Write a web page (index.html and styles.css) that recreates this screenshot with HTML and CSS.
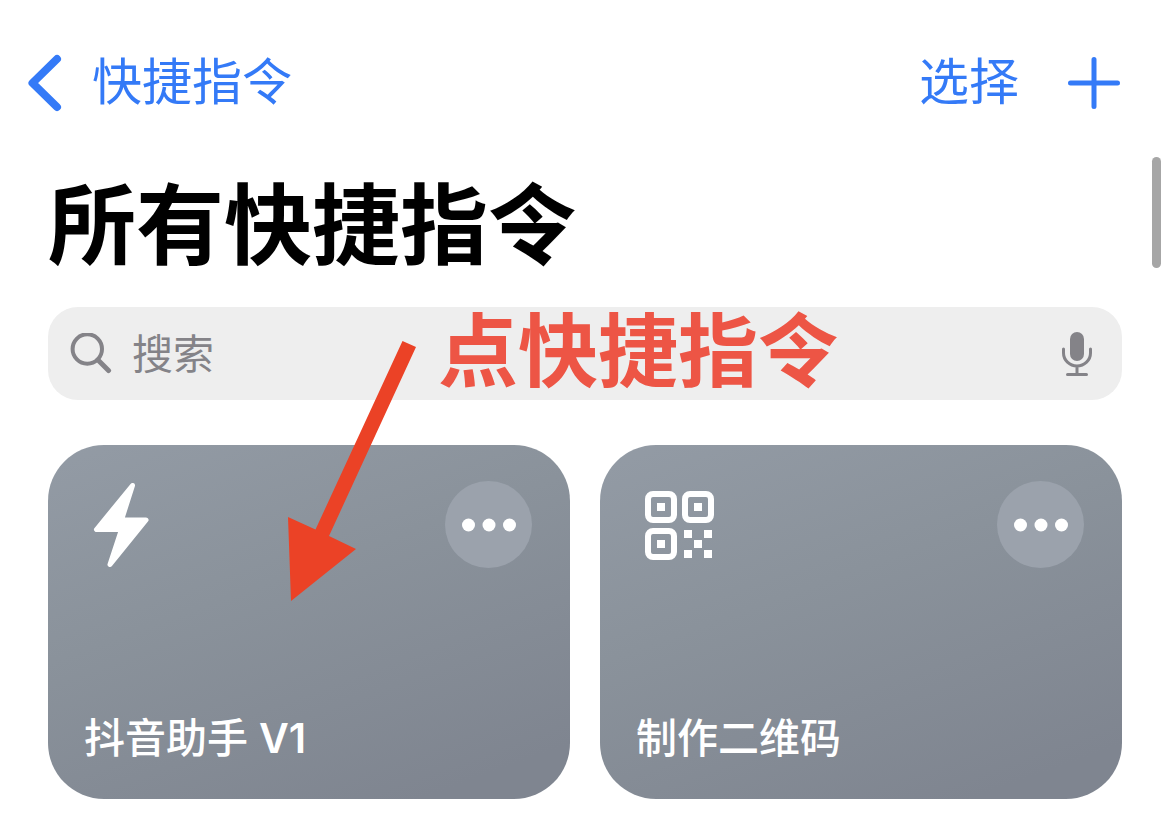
FILE: index.html
```html
<!DOCTYPE html>
<html lang="zh-CN">
<head>
<meta charset="utf-8">
<meta name="viewport" content="width=device-width, initial-scale=1">
<title>所有快捷指令</title>
<link rel="stylesheet" href="styles.css">
</head>
<body>
<header class="navbar">
  <a class="back" href="#">
    <svg class="back-icon" viewBox="0 0 34 58" aria-hidden="true"><path d="M29 5 4.500 29 29 53"/></svg>
    <span>快捷指令</span>
  </a>
  <div class="actions">
    <button class="text-button" type="button">选择</button>
    <button class="add-button" type="button" aria-label="添加">
      <svg class="add-icon" viewBox="0 0 52 52" aria-hidden="true"><path d="M26 2.500v47M2.500 26h47"/></svg>
    </button>
  </div>
</header>
<main class="content">
  <h1 class="title">所有快捷指令</h1>
  <form class="search" role="search">
    <label class="search-label" for="query" aria-label="搜索">
      <svg class="search-icon" viewBox="0 0 42 42" aria-hidden="true"><circle cx="17.300" cy="16" r="14.700"/><path class="handle" d="m28 27 10.500 10.500"/></svg>
    </label>
    <input class="search-input" id="query" type="search" placeholder="搜索">
    <button class="mic-button" type="button" aria-label="语音搜索">
      <svg class="mic-icon" viewBox="0 0 30 46" aria-hidden="true"><rect x="8" y="1" width="14" height="29" rx="7"/><path d="M1.500 18v4a13.500 13 0 0 0 27 0v-4M15 35v8M5.500 43.500h19"/></svg>
    </button>
  </form>
  <section class="grid">
    <article class="card">
      <div class="card-top">
        <svg class="card-icon" viewBox="0 0 70 88" aria-hidden="true"><path class="bolt" d="M39.500 4.500 3.500 48.500h25L17 83.500 53 39H28.500Z"/></svg>
        <button class="more" type="button" aria-label="更多"><svg class="dots" viewBox="0 0 54 14" aria-hidden="true"><circle cx="6.500" cy="7" r="6.500"/><circle cx="27" cy="7" r="6.500"/><circle cx="47.500" cy="7" r="6.500"/></svg></button>
      </div>
      <h2 class="card-title">抖音助手 <span class="latin">V1</span></h2>
    </article>
    <article class="card">
      <div class="card-top">
        <svg class="card-icon" viewBox="0 0 70 88" aria-hidden="true">
          <g class="finder"><rect x="3" y="13" width="26" height="26" rx="5"/><rect x="40" y="13" width="26" height="26" rx="5"/><rect x="3" y="50" width="26" height="26" rx="5"/></g>
          <g class="modules"><rect x="12" y="22" width="8" height="8"/><rect x="49" y="22" width="8" height="8"/><rect x="12" y="59" width="8" height="8"/><rect x="39" y="49" width="8" height="8"/><rect x="59" y="49" width="8" height="8"/><rect x="49" y="59" width="8" height="8"/><rect x="39" y="69" width="8" height="8"/><rect x="59" y="69" width="8" height="8"/></g>
        </svg>
        <button class="more" type="button" aria-label="更多"><svg class="dots" viewBox="0 0 54 14" aria-hidden="true"><circle cx="6.500" cy="7" r="6.500"/><circle cx="27" cy="7" r="6.500"/><circle cx="47.500" cy="7" r="6.500"/></svg></button>
      </div>
      <h2 class="card-title">制作二维码</h2>
    </article>
  </section>
</main>
<p class="callout">点快捷指令</p>
<svg class="arrow" viewBox="0 0 128 260" aria-hidden="true"><path d="M114.500 0 128 6 41 195 68 208 3 260 0 176 27.500 188.500Z"/></svg>
<div class="scroll-thumb" aria-hidden="true"></div>
</body>
</html>
```
FILE: styles.css
```css
* {
  box-sizing: border-box;
}

body {
  position: relative;
  margin: 0;
  background: #fff;
  color: #000;
  font-family: Inter, "Noto Sans CJK SC", sans-serif;
}

button {
  padding: 0;
  border: 0;
  background: none;
  color: inherit;
  font: inherit;
}

svg {
  display: block;
  flex: none;
}

.navbar {
  display: flex;
  align-items: center;
  justify-content: space-between;
  padding: 50px 50px 0 28px;
  color: #347af7;
  font-size: 50px;
  line-height: 65px;
}

.back {
  display: flex;
  align-items: center;
  gap: 30px;
  color: inherit;
  text-decoration: none;
}

.back-icon {
  width: 34px;
  height: 58px;
  fill: none;
  stroke: currentColor;
  stroke-width: 8;
  stroke-linecap: round;
  stroke-linejoin: round;
}

.actions {
  display: flex;
  align-items: center;
  gap: 49px;
}

.add-icon {
  width: 52px;
  height: 52px;
  fill: none;
  stroke: currentColor;
  stroke-width: 5;
  stroke-linecap: round;
}

.content {
  padding: 56px 48px 24px;
}

.title {
  margin: 0 0 28px;
  font-size: 88px;
  font-weight: 700;
  line-height: 108px;
}

.search {
  display: flex;
  align-items: center;
  height: 93px;
  padding: 0 30px 0 22px;
  border-radius: 30px;
  background: #eeeeee;
  color: #848388;
}

.search-icon {
  width: 42px;
  height: 42px;
  fill: none;
  stroke: currentColor;
  stroke-width: 4;
  stroke-linecap: round;
}

.handle {
  stroke-width: 5;
}

.search-input {
  flex: 1;
  min-width: 0;
  height: 64px;
  margin: 0 20px;
  padding: 0;
  border: 0;
  outline: 0;
  background: none;
  color: inherit;
  font: 41px/64px Inter, "Noto Sans CJK SC", sans-serif;
  appearance: none;
}

.search-input::placeholder {
  color: #848388;
  opacity: 1;
}

.mic-icon {
  width: 30px;
  height: 46px;
  fill: none;
  stroke: currentColor;
  stroke-width: 3;
  stroke-linecap: round;
}

.mic-icon rect {
  fill: currentColor;
  stroke: none;
}

.grid {
  display: grid;
  grid-template-columns: 1fr 1fr;
  gap: 30px;
  margin-top: 45px;
}

.card {
  display: flex;
  flex-direction: column;
  justify-content: space-between;
  min-height: 354px;
  padding: 36px;
  border-radius: 56px;
  background: linear-gradient(160deg, #939ba5 0%, #8a929b 40%, #7f8590 90%);
  color: #fff;
}

.card-top {
  display: flex;
  align-items: flex-start;
  justify-content: space-between;
  padding: 0 2px 0 9px;
}

.card-icon {
  width: 70px;
  height: 88px;
  fill: currentColor;
}

.bolt {
  stroke: currentColor;
  stroke-width: 5;
  stroke-linejoin: round;
}

.finder {
  fill: none;
  stroke: currentColor;
  stroke-width: 6;
}

.more {
  display: grid;
  place-items: center;
  width: 87px;
  height: 87px;
  border-radius: 50%;
  background: #9ba2ac;
}

.dots {
  width: 54px;
  height: 14px;
  fill: currentColor;
}

.card-title {
  margin: 0;
  font-size: 41px;
  font-weight: 500;
  line-height: 50px;
}

.latin {
  font-weight: 600;
}

.callout {
  position: absolute;
  top: 301px;
  left: 438px;
  margin: 0;
  color: #ed5545;
  font-size: 80px;
  font-weight: 700;
  line-height: 100px;
  white-space: nowrap;
  pointer-events: none;
}

.arrow {
  position: absolute;
  top: 341px;
  left: 288px;
  width: 128px;
  height: 260px;
  fill: #eb4226;
  pointer-events: none;
}

.scroll-thumb {
  position: absolute;
  top: 157px;
  right: 9px;
  width: 9px;
  height: 111px;
  border-radius: 5px;
  background: #a6a6a6;
}
```
